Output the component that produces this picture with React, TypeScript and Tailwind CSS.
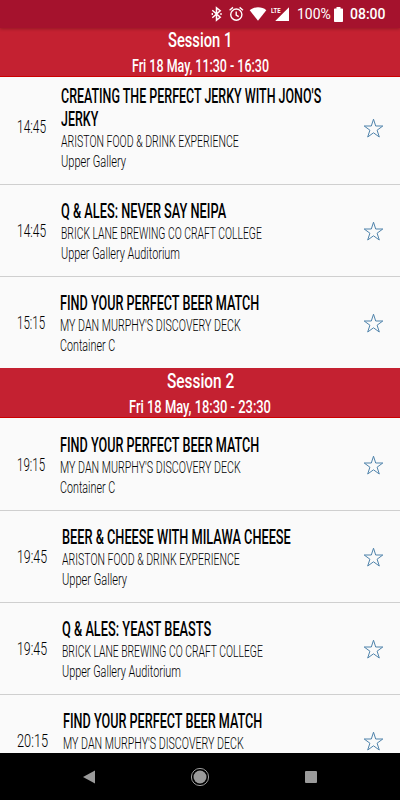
import React, { useLayoutEffect, useRef, useState } from 'react';

interface TextLine {
  text: string;
  width: number;
}

interface SessionEvent {
  time: TextLine;
  title: TextLine[];
  host: TextLine;
  location?: TextLine;
}

interface Session {
  name: TextLine;
  date: TextLine;
  events: SessionEvent[];
}

const ariston = { text: 'ARISTON FOOD & DRINK EXPERIENCE', width: 178 };
const brickLane = { text: 'BRICK LANE BREWING CO CRAFT COLLEGE', width: 201 };
const danMurphys = { text: "MY DAN MURPHY'S DISCOVERY DECK", width: 181 };
const gallery = { text: 'Upper Gallery', width: 65 };
const auditorium = { text: 'Upper Gallery Auditorium', width: 119 };
const container = { text: 'Container C', width: 55 };
const beerMatch = { text: 'FIND YOUR PERFECT BEER MATCH', width: 199 };

const sessions: Session[] = [
  {
    name: { text: 'Session 1', width: 64 },
    date: { text: 'Fri 18 May, 11:30 - 16:30', width: 137 },
    events: [
      {
        time: { text: '14:45', width: 29 },
        title: [
          { text: "CREATING THE PERFECT JERKY WITH JONO'S", width: 260 },
          { text: 'JERKY', width: 37 },
        ],
        host: ariston,
        location: gallery,
      },
      {
        time: { text: '14:45', width: 29 },
        title: [{ text: 'Q & ALES: NEVER SAY NEIPA', width: 165 }],
        host: brickLane,
        location: auditorium,
      },
      { time: { text: '15:15', width: 28 }, title: [beerMatch], host: danMurphys, location: container },
    ],
  },
  {
    name: { text: 'Session 2', width: 67 },
    date: { text: 'Fri 18 May, 18:30 - 23:30', width: 142 },
    events: [
      { time: { text: '19:15', width: 28 }, title: [beerMatch], host: danMurphys, location: container },
      {
        time: { text: '19:45', width: 30 },
        title: [{ text: 'BEER & CHEESE WITH MILAWA CHEESE', width: 229 }],
        host: ariston,
        location: gallery,
      },
      {
        time: { text: '19:45', width: 30 },
        title: [{ text: 'Q & ALES: YEAST BEASTS', width: 149 }],
        host: brickLane,
        location: auditorium,
      },
      { time: { text: '20:15', width: 31 }, title: [beerMatch], host: danMurphys },
    ],
  },
];

// Squeezes a line of text horizontally so it reads as a condensed face
const Condensed = ({ line, className }: { line: TextLine; className: string }) => {
  const ref = useRef<HTMLSpanElement>(null);
  const [scale, setScale] = useState(1);

  useLayoutEffect(() => {
    if (ref.current) setScale(line.width / ref.current.offsetWidth);
  }, [line.width]);

  return (
    <div style={{ width: line.width }} className={className}>
      <span
        ref={ref}
        style={{ transform: `scaleX(${scale})` }}
        className="inline-block origin-left whitespace-nowrap"
      >
        {line.text}
      </span>
    </div>
  );
};

const StatusBar = () => (
  <div className="relative z-20 flex h-7 shrink-0 items-center bg-[#a5122d] pl-[211px] text-white shadow-[0_1px_3px_rgba(0,0,0,0.25)]">
    <svg width="12" height="16" viewBox="0 0 12 16" fill="none" stroke="white" strokeWidth="1.5">
      <path d="M1.3 4.3 9.2 11.3 5.5 14.2V1.8L9.2 4.7 1.3 11.7" />
      <path d="M1.3 7.1v1.8M10 7.1v1.8" strokeWidth="1.3" />
    </svg>
    <svg className="ml-1.5" width="15" height="16" viewBox="0 0 15 16" fill="none" stroke="white" strokeWidth="1.4">
      <circle cx="7.3" cy="8.6" r="5.6" />
      <path d="M.6 4.2 4 1.4M14 4.2 10.6 1.4M7.2 5.5v3.6l2.5 1.5" />
    </svg>
    <svg className="ml-[5px]" width="18" height="14" viewBox="0 0 18 14" fill="white">
      <path d="M9 13.7.7 3.2C5-.6 13-.6 17.3 3.2Z" />
    </svg>
    <div className="relative ml-1 h-4 w-[19px]">
      <svg className="h-4 w-[19px]" viewBox="0 0 19 16" fill="white">
        <path d="M18 1.2V15H4.2L10 9.2V9h.2Z" />
      </svg>
      <span className="absolute top-px left-0 origin-left scale-x-75 bg-[#a5122d] text-[8px] leading-[7px] font-bold">
        LTE
      </span>
    </div>
    <span className="ml-[7px] w-[34px] text-[14px] whitespace-nowrap">100%</span>
    <svg className="ml-[3px]" width="9" height="15" viewBox="0 0 9 15" fill="white">
      <path d="M2.5 0h4v1.5H8.2Q9 1.5 9 2.3V14.2Q9 15 8.2 15H.8Q0 15 0 14.2V2.3Q0 1.5.8 1.5H2.5Z" />
    </svg>
    <span className="ml-[7px] text-[14px] font-medium">08:00</span>
  </div>
);

const SessionHeader = ({ session }: { session: Session }) => (
  <div className="relative z-10 flex h-[50px] flex-col items-center border-b border-[#cc0000] bg-[#c42131] font-medium text-white">
    <Condensed line={session.name} className="h-[25px] text-[20px] leading-[26px]" />
    <Condensed line={session.date} className="h-6 text-[19px] leading-[28px]" />
  </div>
);

const EventRow = ({ event }: { event: SessionEvent }) => (
  <div className="flex min-h-[92px] items-center border-t border-[#cfcfcf] pr-4 pl-[17px] text-black first:border-transparent">
    <Condensed line={event.time} className="text-[19px] leading-[22px] font-light" />
    <div className="ml-[14.5px] flex-1 self-start pt-[15px] pb-3">
      {event.title.map((line) => (
        <Condensed key={line.text} line={line} className="h-[23px] text-[19.5px] leading-[23px] font-medium" />
      ))}
      <Condensed line={event.host} className="h-[21px] text-[16px] leading-[21px] font-light" />
      {event.location && (
        <Condensed line={event.location} className="h-5 text-[16px] leading-5 font-light" />
      )}
    </div>
    <svg className="mt-0.5" width="21" height="21" viewBox="0 0 21 21" fill="none" stroke="#4f83ab">
      <path d="M10.5 1.2 12.7 8H19.8L14.1 12.2 16.3 19 10.5 14.8 4.7 19 6.9 12.2 1.2 8H8.3Z" />
    </svg>
  </div>
);

const NavBar = () => (
  <div className="relative z-20 flex h-[47px] shrink-0 items-center justify-between bg-black pr-[83px] pl-[83px]">
    <svg width="12" height="14" viewBox="0 0 12 14" fill="#9b9b9b">
      <path d="M0 7 12 .5v13Z" />
    </svg>
    <svg width="20" height="20" viewBox="0 0 20 20" fill="#9b9b9b">
      <circle cx="10" cy="10" r="8.6" fill="none" stroke="#9b9b9b" />
      <circle cx="10" cy="10" r="6.5" />
    </svg>
    <div className="h-3 w-3 rounded-[1px] bg-[#9b9b9b]" />
  </div>
);

const App = () => (
  <div className="flex h-[800px] w-[400px] flex-col overflow-hidden bg-[#fafafa] font-[Roboto,sans-serif]">
    <StatusBar />
    <div className="-mt-px min-h-0 flex-1 overflow-hidden">
      {sessions.map((session, index) => (
        <div key={session.name.text}>
          <SessionHeader session={session} />
          <div className={index === 0 ? '-mt-2' : ''}>
            {session.events.map((event, i) => (
              <EventRow key={i} event={event} />
            ))}
          </div>
        </div>
      ))}
    </div>
    <NavBar />
  </div>
);

export default App;
